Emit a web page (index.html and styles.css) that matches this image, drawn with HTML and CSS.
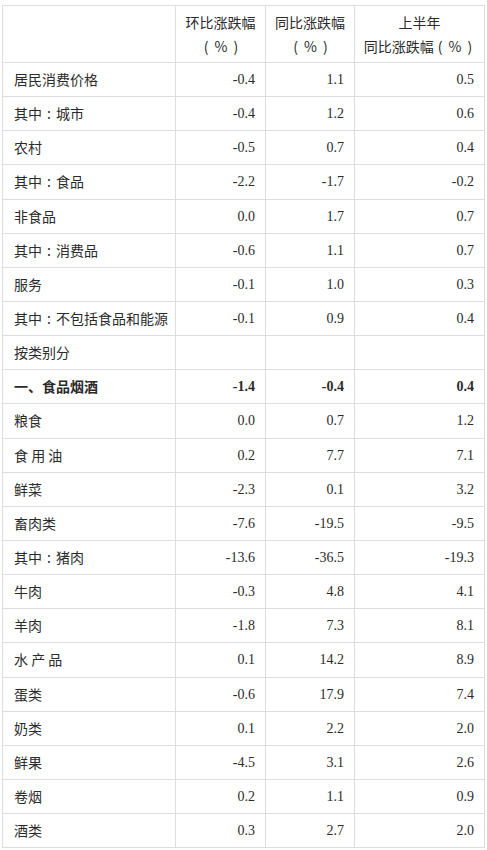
FILE: index.html
```html
<!DOCTYPE html>
<html lang="zh-CN">
<head>
<meta charset="utf-8">
<link rel="stylesheet" href="styles.css">
</head>
<body>
<table class="cpi">
  <colgroup>
    <col class="c-name"><col class="c-num1"><col class="c-num2"><col class="c-num3">
  </colgroup>
  <thead>
    <tr>
      <th></th>
      <th>环比涨跌幅<br><span class="pct">( % )</span></th>
      <th>同比涨跌幅<br><span class="pct">( % )</span></th>
      <th>上半年<br>同比涨跌幅<span class="pct">( % )</span></th>
    </tr>
  </thead>
  <tbody>
    <tr><td class="name">居民消费价格</td><td class="num">-0.4</td><td class="num">1.1</td><td class="num">0.5</td></tr>
    <tr><td class="name">其中<span class="colon">:</span>城市</td><td class="num">-0.4</td><td class="num">1.2</td><td class="num">0.6</td></tr>
    <tr><td class="name">农村</td><td class="num">-0.5</td><td class="num">0.7</td><td class="num">0.4</td></tr>
    <tr><td class="name">其中<span class="colon">:</span>食品</td><td class="num">-2.2</td><td class="num">-1.7</td><td class="num">-0.2</td></tr>
    <tr><td class="name">非食品</td><td class="num">0.0</td><td class="num">1.7</td><td class="num">0.7</td></tr>
    <tr><td class="name">其中<span class="colon">:</span>消费品</td><td class="num">-0.6</td><td class="num">1.1</td><td class="num">0.7</td></tr>
    <tr><td class="name">服务</td><td class="num">-0.1</td><td class="num">1.0</td><td class="num">0.3</td></tr>
    <tr><td class="name">其中<span class="colon">:</span>不包括食品和能源</td><td class="num">-0.1</td><td class="num">0.9</td><td class="num">0.4</td></tr>
    <tr><td class="name">按类别分</td><td class="num"></td><td class="num"></td><td class="num"></td></tr>
    <tr class="bold"><td class="name">一、食品烟酒</td><td class="num">-1.4</td><td class="num">-0.4</td><td class="num">0.4</td></tr>
    <tr><td class="name">粮食</td><td class="num">0.0</td><td class="num">0.7</td><td class="num">1.2</td></tr>
    <tr><td class="name">食 用 油</td><td class="num">0.2</td><td class="num">7.7</td><td class="num">7.1</td></tr>
    <tr><td class="name">鲜菜</td><td class="num">-2.3</td><td class="num">0.1</td><td class="num">3.2</td></tr>
    <tr><td class="name">畜肉类</td><td class="num">-7.6</td><td class="num">-19.5</td><td class="num">-9.5</td></tr>
    <tr><td class="name">其中<span class="colon">:</span>猪肉</td><td class="num">-13.6</td><td class="num">-36.5</td><td class="num">-19.3</td></tr>
    <tr><td class="name">牛肉</td><td class="num">-0.3</td><td class="num">4.8</td><td class="num">4.1</td></tr>
    <tr><td class="name">羊肉</td><td class="num">-1.8</td><td class="num">7.3</td><td class="num">8.1</td></tr>
    <tr><td class="name">水 产 品</td><td class="num">0.1</td><td class="num">14.2</td><td class="num">8.9</td></tr>
    <tr><td class="name">蛋类</td><td class="num">-0.6</td><td class="num">17.9</td><td class="num">7.4</td></tr>
    <tr><td class="name">奶类</td><td class="num">0.1</td><td class="num">2.2</td><td class="num">2.0</td></tr>
    <tr><td class="name">鲜果</td><td class="num">-4.5</td><td class="num">3.1</td><td class="num">2.6</td></tr>
    <tr><td class="name">卷烟</td><td class="num">0.2</td><td class="num">1.1</td><td class="num">0.9</td></tr>
    <tr><td class="name">酒类</td><td class="num">0.3</td><td class="num">2.7</td><td class="num">2.0</td></tr>
  </tbody>
</table>
</body>
</html>
```

FILE: styles.css
```css
html, body {
  margin: 0;
  padding: 0;
  background: #fff;
}

body {
  padding: 5px 0 0 2px;
  color: #2b2b2b;
  font-family: "Noto Sans CJK SC", sans-serif;
  font-size: 14px;
}

.cpi {
  border-collapse: collapse;
  table-layout: fixed;
  width: 482px;
}

.c-name { width: 173px; }
.c-num1 { width: 90px; }
.c-num2 { width: 89px; }
.c-num3 { width: 130px; }

.cpi th,
.cpi td {
  border: 1px solid #dedede;
  padding: 5px 10px;
  line-height: 23px;
  height: 23.15px;
  white-space: nowrap;
}

.cpi th {
  font-weight: normal;
  text-align: center;
  line-height: 24px;
  padding: 4px 2px;
  height: 48px;
}

.pct {
  word-spacing: 3px;
  padding: 0 3px 0 4px;
}

.colon {
  display: inline-block;
  width: 14px;
  text-align: center;
}

.cpi td.name {
  text-align: left;
  padding-left: 11px;
}

.cpi td.num {
  text-align: right;
  font-family: "Liberation Serif", "Noto Sans CJK SC", serif;
}

.cpi tr.bold td {
  font-weight: bold;
}
```
